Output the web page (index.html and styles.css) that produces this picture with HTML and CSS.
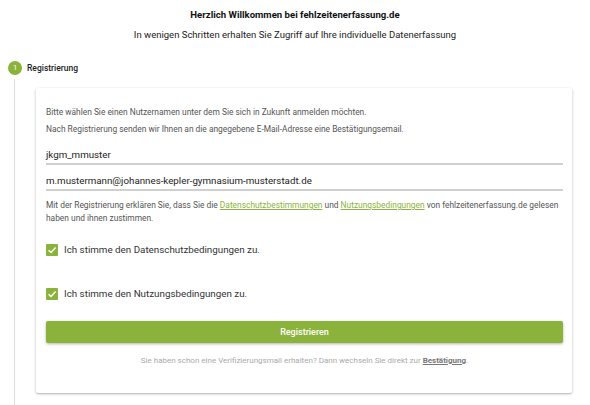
FILE: index.html
```html
<!DOCTYPE html>
<html lang="de">
<head>
<meta charset="utf-8">
<title>Registrierung</title>
<link rel="stylesheet" href="styles.css">
</head>
<body>
<header class="intro">
  <h1 class="intro-title">Herzlich Willkommen bei fehlzeitenerfassung.de</h1>
  <p class="intro-sub">In wenigen Schritten erhalten Sie Zugriff auf Ihre individuelle Datenerfassung</p>
</header>
<section class="stepper">
  <div class="step-head">
    <span class="step-num">1</span>
    <span class="step-label">Registrierung</span>
  </div>
  <div class="step-body">
    <div class="card">
      <p class="hint">Bitte wählen Sie einen Nutzernamen unter dem Sie sich in Zukunft anmelden möchten.</p>
      <p class="hint">Nach Registrierung senden wir Ihnen an die angegebene E-Mail-Adresse eine Bestätigungsemail.</p>
      <div class="field first">jkgm_mmuster</div>
      <div class="field">m.mustermann@johannes-kepler-gymnasium-musterstadt.de</div>
      <p class="terms">Mit der Registrierung erklären Sie, dass Sie die <a href="#" class="link">Datenschutzbestimmungen</a> und <a href="#" class="link">Nutzungsbedingungen</a> von fehlzeitenerfassung.de gelesen haben und ihnen zustimmen.</p>
      <label class="check first-check">
        <span class="box"><svg viewBox="0 0 12 12" width="12" height="12"><path d="M2.6 6.2 L5 8.5 L9.6 3.6" fill="none" stroke="#fff" stroke-width="1.5"/></svg></span>
        <span class="check-label">Ich stimme den Datenschutzbedingungen zu.</span>
      </label>
      <label class="check second-check">
        <span class="box"><svg viewBox="0 0 12 12" width="12" height="12"><path d="M2.6 6.2 L5 8.5 L9.6 3.6" fill="none" stroke="#fff" stroke-width="1.5"/></svg></span>
        <span class="check-label">Ich stimme den Nutzungsbedingungen zu.</span>
      </label>
      <button class="submit" type="button">Registrieren</button>
      <p class="footer-note">Sie haben schon eine Verifizierungsmail erhalten? Dann wechseln Sie direkt zur <a href="#" class="footer-link">Bestätigung</a>.</p>
    </div>
  </div>
</section>
</body>
</html>
```

FILE: styles.css
```css
html, body {
  margin: 0;
  padding: 0;
  background: #fff;
  font-family: Roboto, "Liberation Sans", sans-serif;
  color: #222;
}
.intro {
  text-align: center;
  padding-top: 8px;
}
.intro-title {
  margin: 0;
  font-size: 9.6px;
  font-weight: 700;
  line-height: 14px;
  color: #111;
}
.intro-sub {
  margin: 6px 0 0;
  font-size: 9.5px;
  line-height: 14px;
  color: #222;
}
.stepper {
  margin-top: 19px;
  padding-left: 8px;
}
.step-head {
  display: flex;
  align-items: center;
  gap: 5px;
  height: 14px;
}
.step-num {
  width: 14px;
  height: 14px;
  border-radius: 50%;
  background: #8bb33b;
  color: #fff;
  font-size: 7.5px;
  line-height: 14px;
  text-align: center;
}
.step-label {
  font-size: 8.5px;
  font-weight: 500;
  color: #222;
}
.step-body {
  margin-left: 6px;
  border-left: 1px solid #dcdcdc;
  padding: 9px 0 12px 21px;
  margin-top: 4px;
}
.card {
  width: 517px;
  background: #fff;
  padding: 16px 9px 26px 10px;
  box-shadow: 0 1px 3px rgba(0,0,0,0.25), 0 1px 1px rgba(0,0,0,0.08);
  border-radius: 2px;
}
.hint {
  margin: 0;
  font-size: 8.4px;
  line-height: 17px;
  color: #555;
}
.field {
  font-size: 9.75px;
  line-height: 14px;
  color: #222;
  padding: 0 0 1px;
  border-bottom: 2px solid #d0d0d0;
}
.field.first {
  margin-top: 10px;
}
.field + .field {
  margin-top: 9px;
}
.terms {
  margin: 8px 0 0;
  font-size: 8.4px;
  line-height: 13px;
  color: #555;
}
.link {
  color: #8bb33b;
  text-decoration: underline;
}
.check {
  display: flex;
  align-items: center;
  gap: 6px;
  height: 14px;
}
.first-check {
  margin-top: 18px;
}
.second-check {
  margin-top: 30px;
}
.box {
  width: 12px;
  height: 12px;
  background: #8bb33b;
  border-radius: 1px;
  display: flex;
}
.check-label {
  font-size: 9.8px;
  line-height: 14px;
  color: #333;
}
.submit {
  display: block;
  width: 100%;
  margin-top: 20px;
  height: 22px;
  border: 0;
  border-radius: 2px;
  background: #8bb33b;
  color: #fff;
  font-family: Roboto, "Liberation Sans", sans-serif;
  font-size: 9px;
  font-weight: 500;
  box-shadow: 0 1px 3px rgba(0,0,0,0.3);
}
.footer-note {
  margin: 12px 0 0;
  text-align: center;
  font-size: 8px;
  line-height: 12px;
  color: #aaa;
}
.footer-link {
  color: #777;
  font-weight: 700;
  text-decoration: underline;
}
```
